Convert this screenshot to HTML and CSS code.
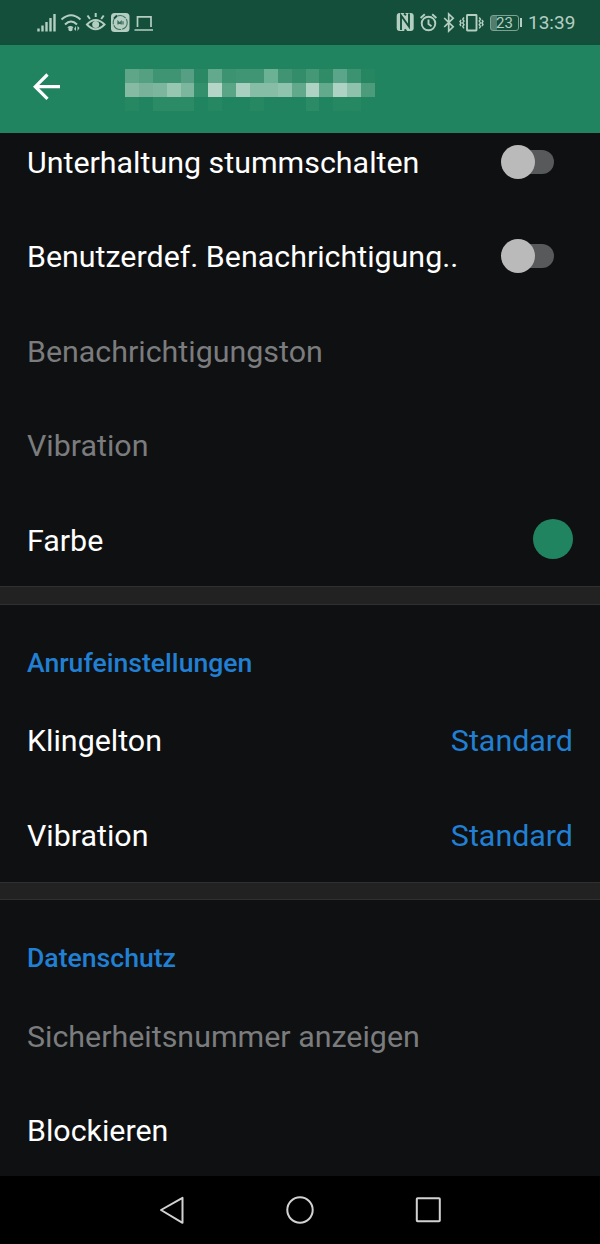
FILE: index.html
```html
<!DOCTYPE html>
<html lang="de">
<head>
<meta charset="utf-8">
<title>Einstellungen</title>
<link rel="stylesheet" href="styles.css">
</head>
<body>
<div class="screen">
  <div class="status">
    <svg class="status-left" width="120" height="24" viewBox="0 0 120 24" fill="none" stroke="currentColor" stroke-width="2">
      <path stroke-width="2.4" d="M1.500 22.500v-3M5.500 22.500v-6M9.500 22.500V13M13.500 22.500V9M17.500 22.500V5"/>
      <path d="M24.500 10.500Q34 2 43.500 10.500M28 15.500Q34 9.500 40 15.500"/>
      <circle cx="33.500" cy="20" r="2.200" fill="currentColor" stroke="none"/>
      <path stroke-width="1.300" d="M30.800 18.700q2.700-2 5.200 0"/>
      <path fill="currentColor" stroke="none" d="M37 20l2-3v5zM42.500 19l-2-2v5z"/>
      <path d="M50 15.500Q58.500 6.500 67.500 15.500Q58.500 25 50 15.500ZM53 10l-2.500-3.500M58.700 8V4M64.200 10l2.500-3.500"/>
      <circle cx="58.700" cy="15.500" r="3.500" fill="currentColor" stroke="none"/>
      <rect x="74" y="4" width="18.500" height="19" rx="3.500" fill="currentColor" stroke="none"/>
      <g stroke="#3c725f"><circle cx="83.200" cy="13.500" r="7" stroke-width="1.100" stroke-dasharray="9 1"/><path stroke-width="1.300" d="M81 15.500v-3l1.700 1.500 1.500-1.500v3M86 12.300v3.200"/><path stroke="#174e3b" stroke-width="1.800" d="M77 9.500l3-3"/></g>
      <path stroke-width="1.700" d="M100.500 18V7.800h13.500V18M97.500 21h18.500"/>
    </svg>
    <div class="status-right">
      <svg width="88" height="24" viewBox="0 0 88 24" fill="none" stroke="currentColor" stroke-width="1.900">
        <rect x=".7" y="4" width="17" height="18" rx="3" fill="currentColor" stroke="none"/>
        <path stroke="#14503b" stroke-width="1.900" d="M5 21V6.500l8 11V4.500M8 4.500l2 1.800M8.500 20.500l2 1.500"/>
        <circle cx="32.500" cy="14.500" r="6.800"/><path d="M32.500 10.500v4.500l3 2.300M24.600 9l4.200-3.700M40.400 9l-4.200-3.700"/>
        <path stroke-width="1.700" d="M48.200 9l9 8.800-4.500 4.200V5l4.500 4.200-9 8.800"/>
        <rect x="71" y="6" width="9.500" height="15.500" rx=".5"/>
        <path stroke-width="1.400" d="M68 8.500l-1.300 1.800 1.300 1.800-1.300 1.800 1.300 1.800-1.300 1.800 1.300 1.800M65 11l-1 1.500 1 1.500-1 1.500 1 1.500M83.200 8.500l1.300 1.800-1.300 1.800 1.300 1.800-1.300 1.800 1.300 1.800-1.300 1.800M86 11l1 1.500-1 1.500 1 1.500-1 1.500"/>
      </svg>
      <div class="battery"><span>23</span></div>
      <span class="time">13:39</span>
    </div>
  </div>
  <div class="bar">
    <svg class="back" width="28" height="28" viewBox="0 0 28 28" fill="none" stroke="#fff" stroke-width="3.200"><path d="M14.500 1.500L2.300 13.700l12.200 12.200M2.500 13.700H27"/></svg>
    <svg class="mosaic" width="250" height="42" viewBox="0 0 18 3" preserveAspectRatio="none" shape-rendering="crispEdges">
      <g>
        <path fill="#5fa689" d="M0 0h1v1H0z"/><path fill="#55a080" d="M1 0h1v1H1z"/><path fill="#3f9473" d="M2 0h2v1H2z"/><path fill="#569f84" d="M4 0h1v1H4z"/><path fill="#2a8864" d="M5 0h1v1H5z"/><path fill="#62a98d" d="M6 0h1v1H6z"/><path fill="#3b9371" d="M7 0h1v1H7z"/><path fill="#409574" d="M8 0h2v1H8z"/><path fill="#6bb194" d="M10 0h1v1h-1z"/><path fill="#409473" d="M11 0h1v1h-1z"/><path fill="#348d6a" d="M12 0h1v1h-1z"/><path fill="#449876" d="M13 0h1v1h-1z"/><path fill="#308b67" d="M14 0h1v1h-1z"/><path fill="#5ba58a" d="M15 0h1v1h-1z"/><path fill="#3c9372" d="M16 0h1v1h-1z"/><path fill="#278662" d="M17 0h1v1h-1z"/>
      </g>
      <g>
        <path fill="#86baa3" d="M0 1h1v1H0z"/><path fill="#79b19a" d="M1 1h1v1H1z"/><path fill="#7cb69e" d="M2 1h1v1H2z"/><path fill="#97c6b1" d="M3 1h1v1H3z"/><path fill="#7cb69e" d="M4 1h1v1H4z"/><path fill="#34906c" d="M5 1h1v1H5z"/><path fill="#b4d5c8" d="M6 1h1v1H6z"/><path fill="#5aa586" d="M7 1h1v1H7z"/><path fill="#a8cfbf" d="M8 1h1v1H8z"/><path fill="#87bca6" d="M9 1h2v1H9z"/><path fill="#90c3ad" d="M11 1h1v1h-1z"/><path fill="#62a98c" d="M12 1h1v1h-1z"/><path fill="#aed3c4" d="M13 1h1v1h-1z"/><path fill="#63aa8d" d="M14 1h1v1h-1z"/><path fill="#aed3c4" d="M15 1h1v1h-1z"/><path fill="#8fc2ac" d="M16 1h1v1h-1z"/><path fill="#4c9c7b" d="M17 1h1v1h-1z"/>
      </g>
      <path fill="#268763" d="M0 2h1v1H0zM6 2h1v1H6zM9 2h1v1H9zM15 2h2v1h-2z"/><path fill="#2b8b66" d="M2 2h3v1H2zM13 2h1v1h-1z"/>
    </svg>
  </div>
  <div class="content">
    <div class="group first">
      <div class="row"><span class="label">Unterhaltung stummschalten</span><i class="switch"></i></div>
      <div class="row"><span class="label">Benutzerdef. Benachrichtigung..</span><i class="switch"></i></div>
      <div class="row off"><span class="label">Benachrichtigungston</span></div>
      <div class="row off"><span class="label">Vibration</span></div>
      <div class="row"><span class="label">Farbe</span><i class="swatch"></i></div>
    </div>
    <div class="divider"></div>
    <div class="group">
      <h2>Anrufeinstellungen</h2>
      <div class="row"><span class="label">Klingelton</span><span class="value">Standard</span></div>
      <div class="row"><span class="label">Vibration</span><span class="value">Standard</span></div>
    </div>
    <div class="divider"></div>
    <div class="group">
      <h2>Datenschutz</h2>
      <div class="row off"><span class="label">Sicherheitsnummer anzeigen</span></div>
      <div class="row"><span class="label">Blockieren</span></div>
    </div>
  </div>
  <div class="nav">
    <svg width="28" height="30" viewBox="0 0 28 30"><path d="M3 15L24.500 2.800v25z"/></svg>
    <svg width="30" height="30" viewBox="0 0 30 30"><circle cx="15" cy="15" r="12.700"/></svg>
    <svg width="28" height="30" viewBox="0 0 28 30"><rect x="2.800" y="3.300" width="23" height="23" rx=".8"/></svg>
  </div>
</div>
</body>
</html>
```
FILE: styles.css
```css
body { margin: 0; background: #0f1012; font-family: Roboto, "Liberation Sans", sans-serif; }
.screen { display: flex; flex-direction: column; width: 600px; height: 1244px; overflow: hidden; color: #fff; }
.status { display: flex; justify-content: space-between; box-sizing: border-box; height: 45px; flex: none; padding: 9px 25px 0 37px; background: #134f3a; color: #b4cec2; }
.status-right { display: flex; height: 27px; align-items: flex-start; }
.battery { display: flex; align-items: center; justify-content: center; position: relative; box-sizing: border-box; width: 29px; height: 16px; margin: 6px 0 0 6px; border: 1.5px solid #7da294; border-radius: 3px; font-size: 15px; line-height: 16px; background: linear-gradient(90deg, #527d6d 23%, transparent 23%); }
.battery::after { content: ""; position: absolute; right: -4px; top: 2px; width: 2px; height: 9px; background: currentColor; }
.time { width: 47px; margin-left: 9px; font-size: 19px; line-height: 28px; white-space: nowrap; }
.bar { display: flex; align-items: flex-start; box-sizing: border-box; height: 88px; flex: none; padding: 24px 33px 0; background: #208461; }
.back { margin-top: 4px; }
.mosaic { margin-left: 64px; }
.content { flex: 1; min-height: 0; overflow: hidden; }
.group.first { margin-top: -18.6px; }
.row { display: flex; align-items: center; justify-content: space-between; box-sizing: border-box; height: 94.4px; padding: 0 27px; font-size: 30.4px; line-height: 36px; white-space: nowrap; }
.label, .value { padding-top: 3px; }
.off { color: #7b7c7d; }
.value, h2 { color: #2180d3; }
h2 { box-sizing: border-box; height: 88.2px; margin: 0; padding: 42px 27px 0; font-size: 26.6px; line-height: 32px; font-weight: 500; }
.switch { display: flex; align-items: center; box-sizing: border-box; width: 45px; height: 24px; margin-right: 19px; border-radius: 12px; background: #58595a; }
.switch::before { content: ""; flex: none; width: 34px; height: 34px; margin-left: -8px; border-radius: 50%; background: #bababa; }
.swatch { width: 40px; height: 40px; border-radius: 50%; background: #208461; }
.divider { box-sizing: border-box; height: 18.2px; border: solid #303030; border-width: 1px 0; background: #222; }
.nav { display: flex; justify-content: space-between; align-items: center; box-sizing: border-box; flex: none; height: 68px; padding: 0 158px; background: #000; fill: none; stroke: #d2d2d2; stroke-width: 2; stroke-linejoin: round; }
```
